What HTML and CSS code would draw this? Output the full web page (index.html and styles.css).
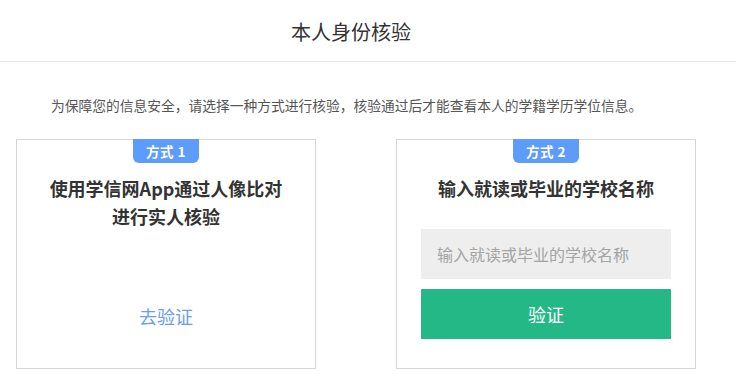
FILE: index.html
```html
<!DOCTYPE html>
<html lang="zh-CN">
<head>
<meta charset="utf-8">
<title>本人身份核验</title>
<link rel="stylesheet" href="styles.css">
</head>
<body>
<header class="top">
  <h1 class="top-title">本人身份核验</h1>
</header>
<p class="notice">为保障您的信息安全，请选择一种方式进行核验，核验通过后才能查看本人的学籍学历学位信息。</p>
<main class="methods">
  <section class="card">
    <span class="badge">方式 1</span>
    <h2 class="card-title">使用学信网App通过人像比对<br>进行实人核验</h2>
    <a class="go-link" href="#">去验证</a>
  </section>
  <section class="card">
    <span class="badge">方式 2</span>
    <h2 class="card-title">输入就读或毕业的学校名称</h2>
    <input class="school-input" type="text" placeholder="输入就读或毕业的学校名称">
    <button class="verify-btn" type="button">验证</button>
  </section>
</main>
</body>
</html>
```

FILE: styles.css
```css
* {
  box-sizing: border-box;
}

html, body {
  margin: 0;
  padding: 0;
  background: #ffffff;
}

body {
  font-family: "Microsoft YaHei", "Noto Sans CJK SC", "Noto Sans", sans-serif;
  color: #333333;
}

.top {
  height: 62px;
  border-bottom: 1px solid #e8e8e8;
  display: flex;
  align-items: center;
  justify-content: center;
  padding-right: 34px;
}

.top-title {
  margin: 0;
  font-size: 20px;
  font-weight: 400;
  line-height: 28px;
  color: #333333;
  padding-top: 2px;
}

.notice {
  margin: 33px 0 0 0;
  padding-left: 51px;
  font-size: 13.75px;
  line-height: 20px;
  color: #555555;
  white-space: nowrap;
}

.methods {
  display: flex;
  gap: 80px;
  padding-left: 16px;
  margin-top: 24px;
}

.card {
  position: relative;
  width: 300px;
  height: 230px;
  border: 1px solid #d6d6d6;
  display: flex;
  flex-direction: column;
  align-items: center;
}

.badge {
  position: absolute;
  top: -1px;
  left: 50%;
  transform: translateX(-50%);
  width: 66px;
  height: 24px;
  background: #5d9cfb;
  color: #ffffff;
  font-size: 13.5px;
  font-weight: 700;
  line-height: 24px;
  text-align: center;
  border-radius: 0 0 6px 6px;
  letter-spacing: 0.5px;
}

.card-title {
  margin: 34px 0 0 0;
  font-size: 18px;
  font-weight: 700;
  line-height: 28px;
  text-align: center;
  color: #333333;
}

.go-link {
  margin-top: auto;
  margin-bottom: 38px;
  font-size: 18px;
  line-height: 28px;
  color: #6a9cf6;
  text-decoration: none;
}

.school-input {
  margin-top: 27px;
  width: 250px;
  height: 50px;
  border: none;
  outline: none;
  background: #eeeeee;
  padding: 0 16px;
  font-family: inherit;
  font-size: 16px;
  color: #333333;
}

.school-input::placeholder {
  color: #a3a3a3;
}

.verify-btn {
  margin-top: 10px;
  width: 250px;
  height: 50px;
  border: none;
  border-radius: 0;
  background: #23b886;
  color: #ffffff;
  font-family: inherit;
  font-size: 18px;
  cursor: pointer;
}
```
